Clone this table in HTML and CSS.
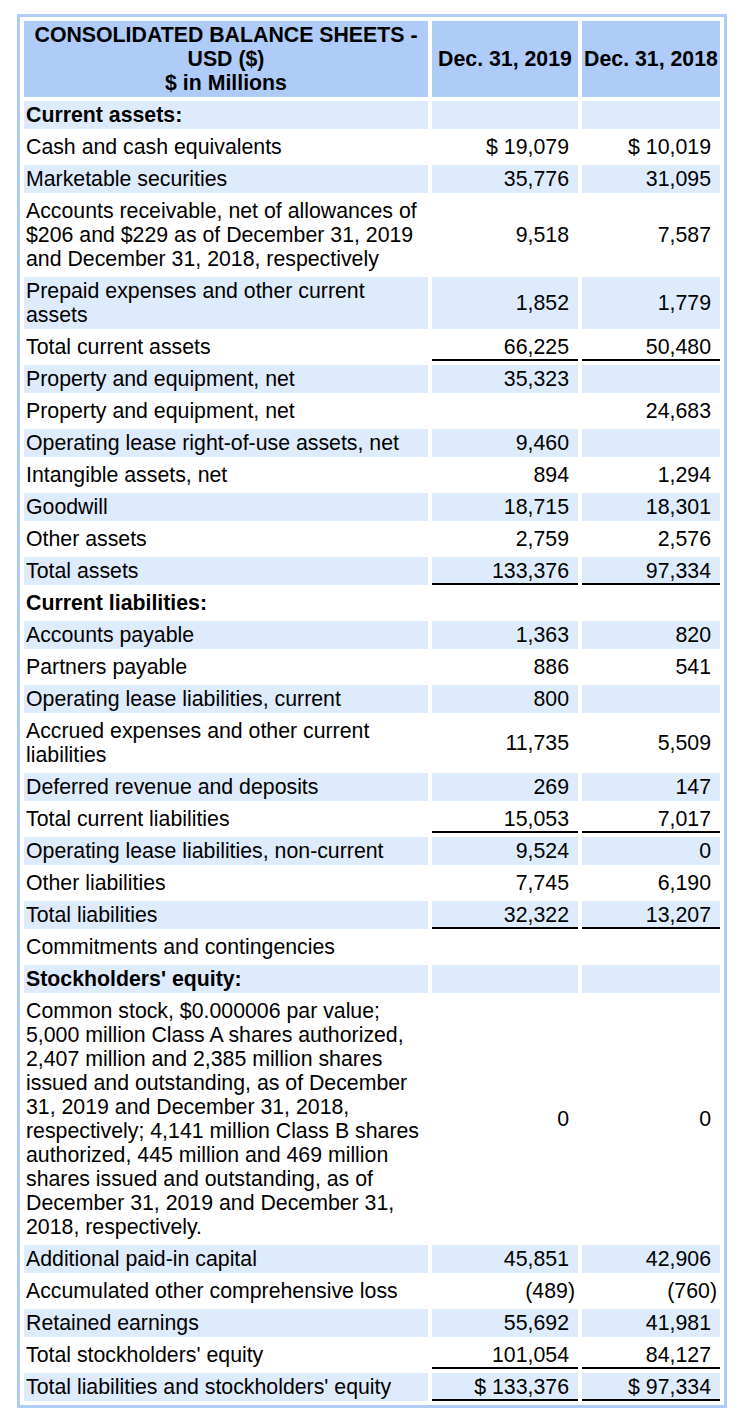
FILE: index.html
```
<!DOCTYPE html>
<html>
<head>
<meta charset="utf-8">
<link rel="stylesheet" href="styles.css">
</head>
<body>
<table class="report">
  <colgroup><col class="c-label"><col class="c-num1"><col class="c-num2"></colgroup>
  <thead>
    <tr>
      <th class="tl">CONSOLIDATED BALANCE SHEETS -<br>USD ($)<br>$ in Millions</th>
      <th class="th">Dec. 31, 2019</th>
      <th class="th">Dec. 31, 2018</th>
    </tr>
  </thead>
  <tbody>
    <tr class="re"><td class="pl b">Current assets:</td><td class="text"></td><td class="text"></td></tr>
    <tr class="ro"><td class="pl">Cash and cash equivalents</td><td class="nump">$ 19,079</td><td class="nump">$ 10,019</td></tr>
    <tr class="re"><td class="pl">Marketable securities</td><td class="nump">35,776</td><td class="nump">31,095</td></tr>
    <tr class="ro"><td class="pl">Accounts receivable, net of allowances of<br>$206 and $229 as of December 31, 2019<br>and December 31, 2018, respectively</td><td class="nump">9,518</td><td class="nump">7,587</td></tr>
    <tr class="re"><td class="pl">Prepaid expenses and other current<br>assets</td><td class="nump">1,852</td><td class="nump">1,779</td></tr>
    <tr class="ro"><td class="pl">Total current assets</td><td class="nump rou">66,225</td><td class="nump rou">50,480</td></tr>
    <tr class="re"><td class="pl">Property and equipment, net</td><td class="nump">35,323</td><td class="text"></td></tr>
    <tr class="ro"><td class="pl">Property and equipment, net</td><td class="text"></td><td class="nump">24,683</td></tr>
    <tr class="re"><td class="pl">Operating lease right-of-use assets, net</td><td class="nump">9,460</td><td class="text"></td></tr>
    <tr class="ro"><td class="pl">Intangible assets, net</td><td class="nump">894</td><td class="nump">1,294</td></tr>
    <tr class="re"><td class="pl">Goodwill</td><td class="nump">18,715</td><td class="nump">18,301</td></tr>
    <tr class="ro"><td class="pl">Other assets</td><td class="nump">2,759</td><td class="nump">2,576</td></tr>
    <tr class="re"><td class="pl">Total assets</td><td class="nump rou">133,376</td><td class="nump rou">97,334</td></tr>
    <tr class="ro"><td class="pl b">Current liabilities:</td><td class="text"></td><td class="text"></td></tr>
    <tr class="re"><td class="pl">Accounts payable</td><td class="nump">1,363</td><td class="nump">820</td></tr>
    <tr class="ro"><td class="pl">Partners payable</td><td class="nump">886</td><td class="nump">541</td></tr>
    <tr class="re"><td class="pl">Operating lease liabilities, current</td><td class="nump">800</td><td class="text"></td></tr>
    <tr class="ro"><td class="pl">Accrued expenses and other current<br>liabilities</td><td class="nump">11,735</td><td class="nump">5,509</td></tr>
    <tr class="re"><td class="pl">Deferred revenue and deposits</td><td class="nump">269</td><td class="nump">147</td></tr>
    <tr class="ro"><td class="pl">Total current liabilities</td><td class="nump rou">15,053</td><td class="nump rou">7,017</td></tr>
    <tr class="re"><td class="pl">Operating lease liabilities, non-current</td><td class="nump">9,524</td><td class="nump">0</td></tr>
    <tr class="ro"><td class="pl">Other liabilities</td><td class="nump">7,745</td><td class="nump">6,190</td></tr>
    <tr class="re"><td class="pl">Total liabilities</td><td class="nump rou">32,322</td><td class="nump rou">13,207</td></tr>
    <tr class="ro"><td class="pl">Commitments and contingencies</td><td class="text"></td><td class="text"></td></tr>
    <tr class="re"><td class="pl b">Stockholders' equity:</td><td class="text"></td><td class="text"></td></tr>
    <tr class="ro"><td class="pl">Common stock, $0.000006 par value;<br>5,000 million Class A shares authorized,<br>2,407 million and 2,385 million shares<br>issued and outstanding, as of December<br>31, 2019 and December 31, 2018,<br>respectively; 4,141 million Class B shares<br>authorized, 445 million and 469 million<br>shares issued and outstanding, as of<br>December 31, 2019 and December 31,<br>2018, respectively.</td><td class="nump">0</td><td class="nump">0</td></tr>
    <tr class="re"><td class="pl">Additional paid-in capital</td><td class="nump">45,851</td><td class="nump">42,906</td></tr>
    <tr class="ro"><td class="pl">Accumulated other comprehensive loss</td><td class="num">(489)</td><td class="num">(760)</td></tr>
    <tr class="re"><td class="pl">Retained earnings</td><td class="nump">55,692</td><td class="nump">41,981</td></tr>
    <tr class="ro"><td class="pl">Total stockholders' equity</td><td class="nump rou">101,054</td><td class="nump rou">84,127</td></tr>
    <tr class="re"><td class="pl">Total liabilities and stockholders' equity</td><td class="nump rou">$ 133,376</td><td class="nump rou">$ 97,334</td></tr>
  </tbody>
</table>
</body>
</html>
```

FILE: styles.css
```
html, body {
  margin: 0;
  padding: 0;
  background: #ffffff;
}

body {
  font-family: "Liberation Sans", Arial, Helvetica, sans-serif;
  font-size: 21.3px;
  line-height: 24px;
  color: #000000;
}

.report {
  margin: 14px 0 0 17px;
  border: 3px solid #afcbf8;
  border-collapse: separate;
  border-spacing: 4px;
  table-layout: fixed;
  width: 710px;
}

.c-label { width: 404px; }
.c-num1 { width: 146px; }
.c-num2 { width: 138px; }

.report th,
.report td {
  padding: 2px 2px;
  vertical-align: middle;
}

.report th {
  background: #afcbf8;
  font-weight: bold;
  text-align: center;
}

.report .th {
  white-space: nowrap;
}

.report .re td {
  background: #deebfc;
}

.report .ro td {
  background: #ffffff;
}

.report .pl {
  text-align: left;
}

.report .b {
  font-weight: bold;
}

.report .nump {
  text-align: right;
  white-space: nowrap;
  padding-right: 9px;
}

.report .num {
  text-align: right;
  white-space: nowrap;
  padding-right: 3px;
}

.report .rou {
  border-bottom: 2px solid #000000;
  padding-bottom: 0;
}
```
